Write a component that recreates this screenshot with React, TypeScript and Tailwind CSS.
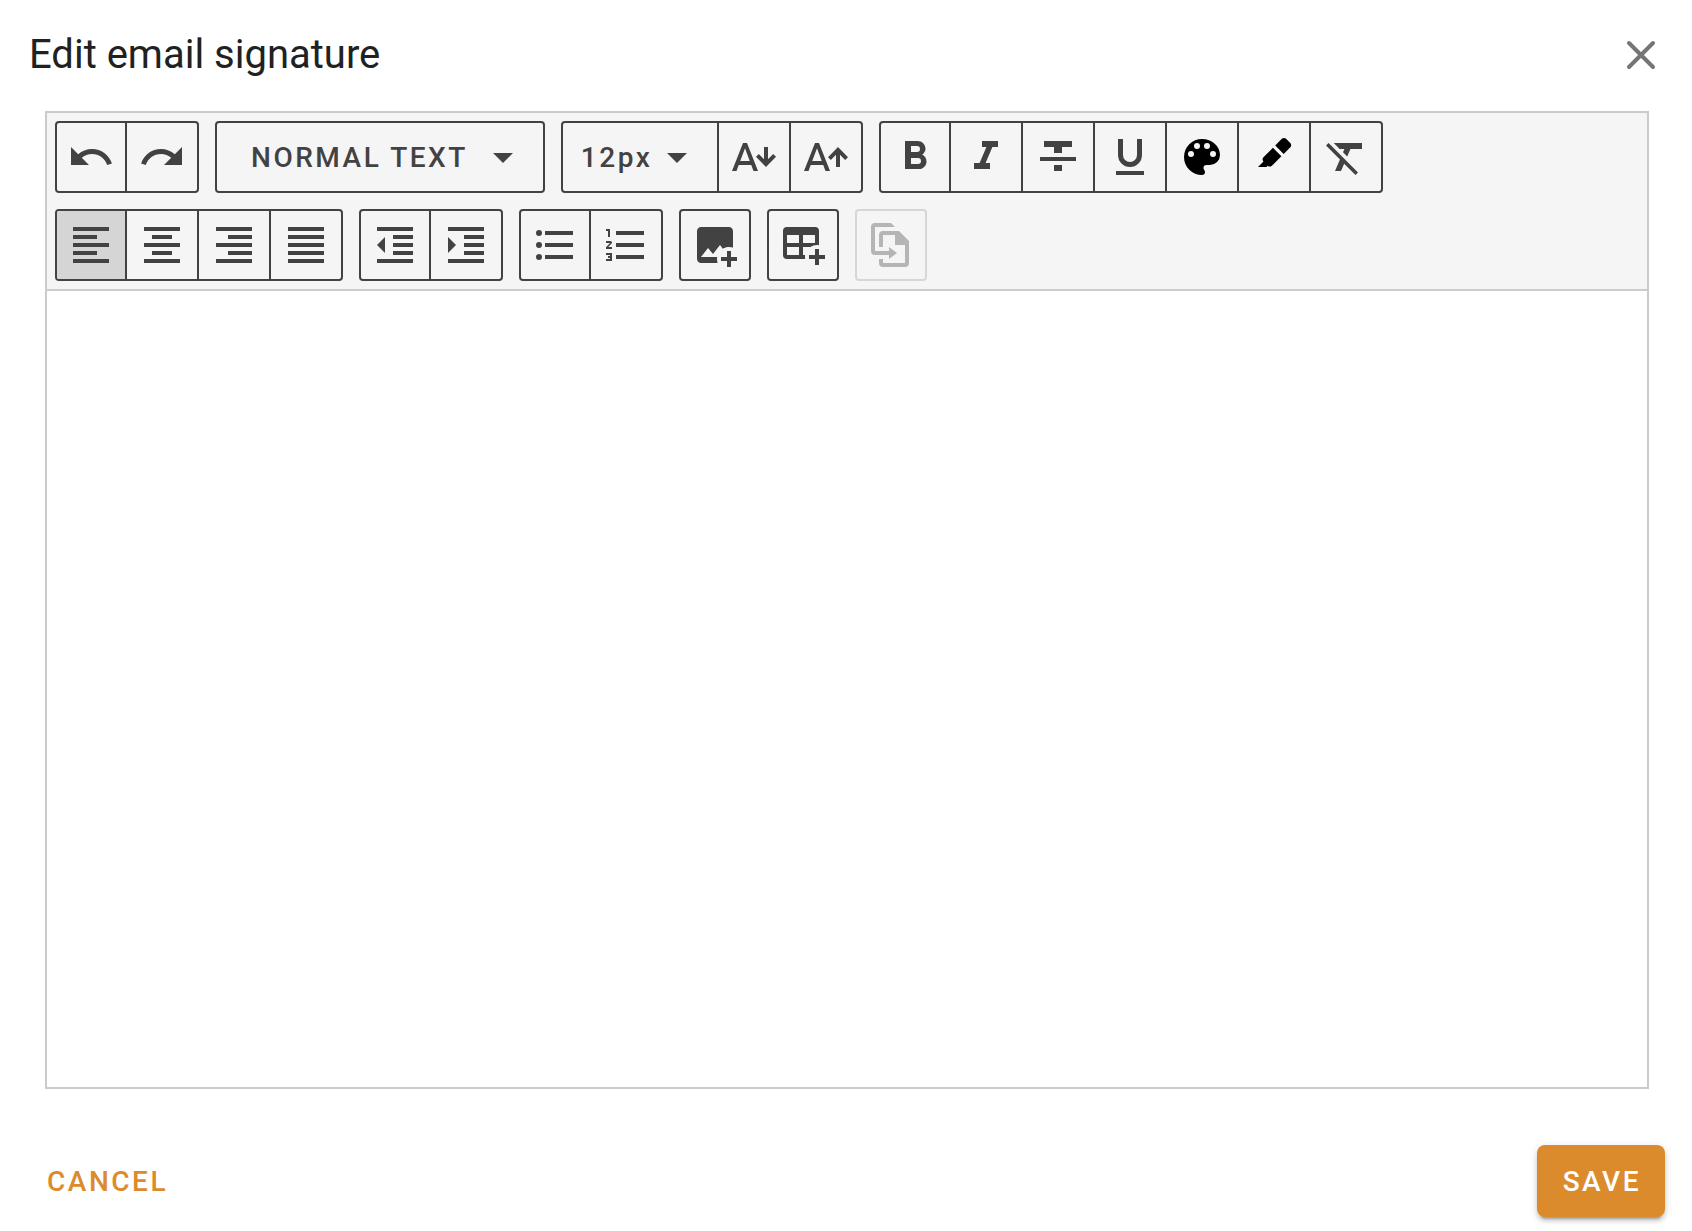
import type { ReactNode } from 'react';

const icons = {
  undo: 'M12.5,8C9.85,8 7.45,9 5.6,10.6L2,7V16H11L7.38,12.38C8.77,11.22 10.54,10.5 12.5,10.5C16.04,10.5 19.05,12.81 20.1,16L22.47,15.22C21.08,11.03 17.15,8 12.5,8Z',
  redo: 'M18.4,10.6C16.55,9 14.15,8 11.5,8C6.85,8 2.92,11.03 1.54,15.22L3.9,16C4.95,12.81 7.95,10.5 11.5,10.5C13.45,10.5 15.23,11.22 16.62,12.38L13,16H22V7L18.4,10.6Z',
  menuDown: 'M7,10L12,15L17,10H7Z',
  sizeDown:
    'M5.12,14L7.5,7.67L9.87,14M6.5,5L1,19H3.25L4.37,16H10.62L11.75,19H14L8.5,5H6.5M18,17L23,11.93L21.59,10.5L19,13.1V7H17V13.1L14.41,10.5L13,11.93L18,17Z',
  sizeUp:
    'M5.12,14L7.5,7.67L9.87,14M6.5,5L1,19H3.25L4.37,16H10.62L11.75,19H14L8.5,5H6.5M18,7L13,12.07L14.41,13.5L17,10.9V17H19V10.9L21.59,13.5L23,12.07L18,7Z',
  bold: 'M13.5,15.5H10V12.5H13.5A1.5,1.5 0 0,1 15,14A1.5,1.5 0 0,1 13.5,15.5M10,6.5H13A1.5,1.5 0 0,1 14.5,8A1.5,1.5 0 0,1 13,9.5H10M15.6,10.79C16.57,10.11 17.25,9 17.25,8C17.25,5.74 15.5,4 13.25,4H7V18H14.04C16.14,18 17.75,16.3 17.75,14.21C17.75,12.69 16.89,11.39 15.6,10.79Z',
  italic: 'M10,4V7H12.21L8.79,15H6V18H14V15H11.79L15.21,7H18V4H10Z',
  strike: 'M3,14H21V12H3M5,4V7H10V10H14V7H19V4M10,19H14V16H10V19Z',
  underline:
    'M5,21H19V19H5V21M12,17A6,6 0 0,0 18,11V3H15.5V11A3.5,3.5 0 0,1 12,14.5A3.5,3.5 0 0,1 8.5,11V3H6V11A6,6 0 0,0 12,17Z',
  palette:
    'M17.5,12A1.5,1.5 0 0,1 16,10.5A1.5,1.5 0 0,1 17.5,9A1.5,1.5 0 0,1 19,10.5A1.5,1.5 0 0,1 17.5,12M14.5,8A1.5,1.5 0 0,1 13,6.5A1.5,1.5 0 0,1 14.5,5A1.5,1.5 0 0,1 16,6.5A1.5,1.5 0 0,1 14.5,8M9.5,8A1.5,1.5 0 0,1 8,6.5A1.5,1.5 0 0,1 9.5,5A1.5,1.5 0 0,1 11,6.5A1.5,1.5 0 0,1 9.5,8M6.5,12A1.5,1.5 0 0,1 5,10.5A1.5,1.5 0 0,1 6.5,9A1.5,1.5 0 0,1 8,10.5A1.5,1.5 0 0,1 6.5,12M12,3A9,9 0 0,0 3,12A9,9 0 0,0 12,21A1.5,1.5 0 0,0 13.5,19.5C13.5,19.11 13.35,18.76 13.11,18.5C12.88,18.23 12.73,17.88 12.73,17.5A1.5,1.5 0 0,1 14.23,16H16A5,5 0 0,0 21,11C21,6.58 16.97,3 12,3Z',
  marker:
    'M4,17L6.75,14.25L6.72,14.23C6.14,13.64 6.14,12.69 6.72,12.11L11.46,7.37L15.7,11.61L10.96,16.35C10.39,16.93 9.46,16.93 8.87,16.37L8.24,17H4M15.91,2.91C16.5,2.33 17.45,2.33 18.03,2.91L20.16,5.03C20.74,5.62 20.74,6.57 20.16,7.16L16.86,10.45L12.62,6.21L15.91,2.91Z',
  clear:
    'M6,5V5.18L8.82,8H11.22L10.5,9.68L12.6,11.78L14.21,8H20V5H6M3.27,5L2,6.27L8.97,13.24L6.5,19H9.5L11.07,15.34L16.73,21L18,19.73L3.55,5.27L3.27,5Z',
  alignLeft: 'M3,3H21V5H3V3M3,7H15V9H3V7M3,11H21V13H3V11M3,15H15V17H3V15M3,19H21V21H3V19Z',
  alignCenter: 'M3,3H21V5H3V3M7,7H17V9H7V7M3,11H21V13H3V11M7,15H17V17H7V15M3,19H21V21H3V19Z',
  alignRight: 'M3,3H21V5H3V3M9,7H21V9H9V7M3,11H21V13H3V11M9,15H21V17H9V15M3,19H21V21H3V19Z',
  justify: 'M3,3H21V5H3V3M3,7H21V9H3V7M3,11H21V13H3V11M3,15H21V17H3V15M3,19H21V21H3V19Z',
  outdent:
    'M11,13H21V11H11M11,9H21V7H11M3,3V5H21V3M3,21H21V19H3M3,12L7,16V8M11,17H21V15H11V17Z',
  indent:
    'M11,13H21V11H11M11,9H21V7H11M3,3V5H21V3M11,17H21V15H11M3,8V16L7,12M3,21H21V19H3V21Z',
  bullets:
    'M7,5H21V7H7V5M7,13V11H21V13H7M4,4.5A1.5,1.5 0 0,1 5.5,6A1.5,1.5 0 0,1 4,7.5A1.5,1.5 0 0,1 2.5,6A1.5,1.5 0 0,1 4,4.5M4,10.5A1.5,1.5 0 0,1 5.5,12A1.5,1.5 0 0,1 4,13.5A1.5,1.5 0 0,1 2.5,12A1.5,1.5 0 0,1 4,10.5M7,19V17H21V19H7M4,16.5A1.5,1.5 0 0,1 5.5,18A1.5,1.5 0 0,1 4,19.5A1.5,1.5 0 0,1 2.5,18A1.5,1.5 0 0,1 4,16.5Z',
  numbers:
    'M7,13V11H21V13H7M7,19V17H21V19H7M7,7V5H21V7H7M3,8V5H2V4H4V8H3M2,17V16H5V20H2V19H4V18.5H3V17.5H4V17H2M4.25,10A0.75,0.75 0 0,1 5,10.75C5,10.95 4.92,11.14 4.79,11.27L3.12,13H5V14H2V13.08L4,11H2V10H4.25Z',
  imagePlus:
    'M18,15V18H15V20H18V23H20V20H23V18H20V15H18M13.3,21H5C3.9,21 3,20.1 3,19V5C3,3.9 3.9,3 5,3H19C20.1,3 21,3.9 21,5V13.3C20.4,13.1 19.7,13 19,13C17.9,13 16.8,13.3 15.9,13.9L14.5,12L11,16.5L8.5,13.5L5,18H13.1C13,18.3 13,18.7 13,19C13,19.7 13.1,20.4 13.3,21Z',
  tablePlus:
    'M18,14H20V17H23V19H20V22H18V19H15V17H18V14M4,3H18A2,2 0 0,1 20,5V12.08C18.45,11.82 16.92,12.18 15.68,13H12V17H13.08C12.97,17.68 12.97,18.35 13.08,19H4A2,2 0 0,1 2,17V5A2,2 0 0,1 4,3M4,7V11H10V7H4M12,7V11H18V7H12M4,13V17H10V13H4Z',
  template:
    'M4,1H12L14,3H4V15H11V13L15,16L11,19V17H4A2,2 0 0,1 2,15V3A2,2 0 0,1 4,1M8,5H16L21,10V21A2,2 0 0,1 19,23H8A2,2 0 0,1 6,21V19H8V21H19V12H14V7H8V13H6V7A2,2 0 0,1 8,5Z',
};

type IconName = keyof typeof icons;

function Icon({ name }: { name: IconName }) {
  return (
    <svg viewBox="0 0 24 24" className="size-12 shrink-0 fill-current" aria-hidden="true">
      <path d={icons[name]} />
    </svg>
  );
}

function Group({ children, disabled }: { children: ReactNode; disabled?: boolean }) {
  return (
    <div
      className={`flex h-18 divide-x-2 overflow-hidden rounded border-2 ${
        disabled ? 'border-[#d6d6d6] text-[#b5b5b5]' : 'divide-[#424242] border-[#424242]'
      }`}
    >
      {children}
    </div>
  );
}

type Tool = { icon: IconName; label: string; active?: boolean; black?: boolean; disabled?: boolean };

function ToolButton({ icon, label, active, black, disabled }: Tool) {
  return (
    <button
      type="button"
      aria-label={label}
      aria-pressed={active}
      disabled={disabled}
      className={`box-content flex w-[70px] items-center justify-center first:w-[68px] ${
        active ? 'bg-[#d5d5d5]' : ''
      } ${black ? 'text-black' : ''}`}
    >
      <Icon name={icon} />
    </button>
  );
}

function ToolGroup({ tools }: { tools: Tool[] }) {
  return (
    <Group disabled={tools.every((t) => t.disabled)}>
      {tools.map((tool) => (
        <ToolButton key={tool.label} {...tool} />
      ))}
    </Group>
  );
}

const history: Tool[] = [
  { icon: 'undo', label: 'Undo' },
  { icon: 'redo', label: 'Redo' },
];

const fontSize: Tool[] = [
  { icon: 'sizeDown', label: 'Decrease font size' },
  { icon: 'sizeUp', label: 'Increase font size' },
];

const formatting: Tool[] = [
  { icon: 'bold', label: 'Bold' },
  { icon: 'italic', label: 'Italic' },
  { icon: 'strike', label: 'Strikethrough' },
  { icon: 'underline', label: 'Underline' },
  { icon: 'palette', label: 'Text color', black: true },
  { icon: 'marker', label: 'Highlight color', black: true },
  { icon: 'clear', label: 'Clear formatting' },
];

const secondRow: Tool[][] = [
  [
    { icon: 'alignLeft', label: 'Align left', active: true },
    { icon: 'alignCenter', label: 'Align center' },
    { icon: 'alignRight', label: 'Align right' },
    { icon: 'justify', label: 'Justify' },
  ],
  [
    { icon: 'outdent', label: 'Decrease indent' },
    { icon: 'indent', label: 'Increase indent' },
  ],
  [
    { icon: 'bullets', label: 'Bulleted list' },
    { icon: 'numbers', label: 'Numbered list' },
  ],
  [{ icon: 'imagePlus', label: 'Insert image' }],
  [{ icon: 'tablePlus', label: 'Insert table' }],
  [{ icon: 'template', label: 'Insert template', disabled: true }],
];

export default function App() {
  return (
    <div className="flex min-h-screen flex-col bg-white font-[Roboto,sans-serif]">
      <header className="flex items-center justify-between pt-6 pr-6 pl-[29px]">
        <h1 className="text-[40px] leading-[62px] text-[#212121]">Edit email signature</h1>
        <button type="button" aria-label="Close" className="text-[#757575]">
          <svg viewBox="0 0 54 54" className="size-[54px]" aria-hidden="true">
            <path
              d="M15 15L39 39M39 15L15 39"
              stroke="currentColor"
              strokeWidth="4"
              strokeLinecap="round"
            />
          </svg>
        </button>
      </header>

      <main className="mt-[25px] mr-[43px] ml-[45px] flex flex-1 flex-col border-2 border-[#cbcbcb]">
        <div
          role="toolbar"
          aria-label="Formatting"
          className="flex flex-col gap-4 border-b-2 border-[#cbcbcb] bg-[#f5f5f5] p-2 text-[28px] font-medium text-[#424242]"
        >
          <div className="flex flex-wrap gap-4">
            <ToolGroup tools={history} />
            <Group>
              <button
                type="button"
                aria-haspopup="listbox"
                className="flex items-center gap-[11px] pr-4 pl-[34px] tracking-[0.09em] uppercase"
              >
                <span className="pt-0.5">Normal text</span>
                <Icon name="menuDown" />
              </button>
            </Group>
            <Group>
              <button
                type="button"
                aria-haspopup="listbox"
                className="flex items-center gap-px pr-4 pl-[18px] tracking-[0.09em]"
              >
                <span className="pt-0.5">12px</span>
                <Icon name="menuDown" />
              </button>
              {fontSize.map((tool) => (
                <ToolButton key={tool.label} {...tool} />
              ))}
            </Group>
            <ToolGroup tools={formatting} />
          </div>
          <div className="flex flex-wrap gap-4">
            {secondRow.map((tools) => (
              <ToolGroup key={tools[0].label} tools={tools} />
            ))}
          </div>
        </div>
        <textarea
          aria-label="Email signature"
          className="w-full flex-1 resize-none bg-white p-4 text-[28px] outline-none"
        />
      </main>

      <footer className="flex items-center justify-between pt-14 pr-[27px] pb-3.5 pl-[31px] text-[28px] font-medium tracking-[0.09em]">
        <button type="button" className="h-18 px-4 pt-0.5 text-[#dc8b2c] uppercase">
          Cancel
        </button>
        <button
          type="button"
          className="h-18 rounded-lg bg-[#dc8b2c] pt-0.5 pr-6 pl-[26px] text-white uppercase shadow-[0_6px_2px_-4px_rgba(0,0,0,0.2),0_4px_4px_0_rgba(0,0,0,0.14),0_2px_10px_0_rgba(0,0,0,0.12)]"
        >
          Save
        </button>
      </footer>
    </div>
  );
}
